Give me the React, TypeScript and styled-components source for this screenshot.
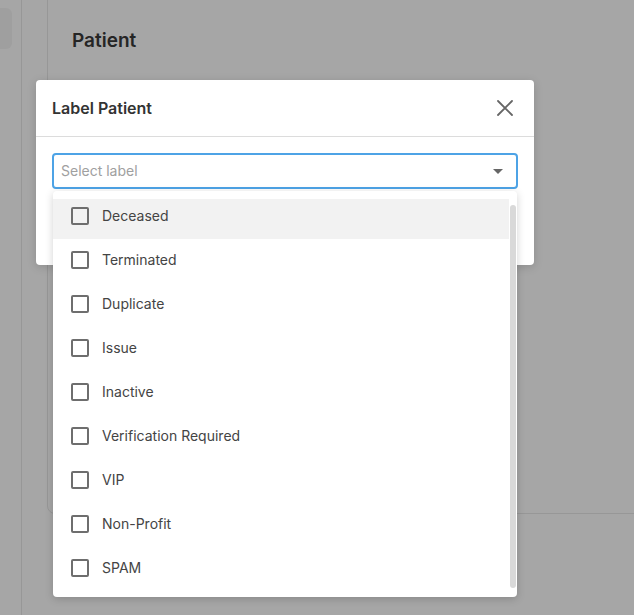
import React from 'react';
import styled, { createGlobalStyle } from 'styled-components';

const LABELS = [
    'Deceased',
    'Terminated',
    'Duplicate',
    'Issue',
    'Inactive',
    'Verification Required',
    'VIP',
    'Non-Profit',
    'SPAM',
];

const GlobalStyle = createGlobalStyle`
    html, body {
        margin: 0;
        padding: 0;
        background: #ffffff;
        font-family: Inter, "Liberation Sans", sans-serif;
    }
`;

const Page = styled.div`
    position: relative;
    display: flex;
    height: 615px;
    overflow: hidden;
    background: #ffffff;
`;

const Sidebar = styled.div`
    width: 22px;
    flex-shrink: 0;
    padding-top: 8px;
    border-right: 1px solid #e8e8e8;
    box-sizing: border-box;
`;

const SideItem = styled.div`
    width: 12px;
    height: 41px;
    border-radius: 0 6px 6px 0;
    background: #f5f5f5;
`;

const Rail = styled.div`
    width: 25px;
    flex-shrink: 0;
`;

const Main = styled.div`
    flex: 1;
    min-width: 0;
`;

const Card = styled.div`
    margin-top: -10px;
    margin-right: -20px;
    height: 524px;
    box-sizing: border-box;
    border: 1px solid #e8e8e8;
    border-radius: 8px;
    padding: 36px 24px 0;
`;

const CardTitle = styled.h1`
    margin: 0;
    font-size: 19px;
    font-weight: 600;
    line-height: 28px;
    color: #3a3a3a;
`;

const Overlay = styled.div`
    position: absolute;
    inset: 0;
    background: rgba(0, 0, 0, 0.35);
`;

const Modal = styled.div`
    position: absolute;
    left: 36px;
    top: 80px;
    width: 498px;
    height: 185px;
    background: #ffffff;
    border-radius: 4px;
    box-shadow: 0 2px 10px rgba(0, 0, 0, 0.15);
`;

const ModalHeader = styled.div`
    display: flex;
    align-items: center;
    justify-content: space-between;
    height: 56px;
    padding: 0 20px 0 16px;
    border-bottom: 1px solid #dcdcdc;
`;

const ModalTitle = styled.h2`
    margin: 0;
    font-size: 16px;
    font-weight: 600;
    color: #333333;
`;

const CloseButton = styled.button`
    display: flex;
    align-items: center;
    justify-content: center;
    width: 18px;
    height: 18px;
    padding: 0;
    border: none;
    background: none;
    cursor: pointer;
`;

const ModalBody = styled.div`
    position: relative;
    padding: 16px;
`;

const SelectBox = styled.div`
    display: flex;
    align-items: center;
    justify-content: space-between;
    height: 36px;
    box-sizing: border-box;
    padding: 0 13px 1px 7px;
    border: 2px solid #4da3e6;
    border-radius: 4px;
`;

const Placeholder = styled.span`
    font-size: 14px;
    color: #a0a0a0;
`;

const Caret = styled.span`
    width: 0;
    height: 0;
    border-left: 5px solid transparent;
    border-right: 5px solid transparent;
    border-top: 5px solid #666666;
    margin-top: 2px;
`;

const Menu = styled.div`
    position: absolute;
    left: 17px;
    top: 54px;
    width: 464px;
    height: 406px;
    display: flex;
    background: #ffffff;
    border-radius: 4px;
    box-shadow: 0 2px 8px rgba(0, 0, 0, 0.18);
    z-index: 2;
`;

const OptionList = styled.ul`
    flex: 1;
    list-style: none;
    margin: 0;
    padding: 8px 0 6px;
    display: flex;
    flex-direction: column;
    gap: 4px;
`;

const Option = styled.li<{ $active?: boolean }>`
    display: flex;
    align-items: center;
    gap: 13px;
    height: 40px;
    box-sizing: border-box;
    padding: 0 0 7px 18px;
    background: ${(p) => (p.$active ? '#f2f2f2' : 'transparent')};
    font-size: 14px;
    color: #444444;
    cursor: pointer;
`;

const CheckBox = styled.span`
    width: 18px;
    height: 18px;
    box-sizing: border-box;
    border: 2px solid #6e6e6e;
    border-radius: 2px;
    flex-shrink: 0;
`;

const ScrollTrack = styled.div`
    width: 8px;
    display: flex;
    justify-content: center;
    padding: 14px 0 9px;
    box-sizing: border-box;
`;

const ScrollThumb = styled.div`
    width: 6px;
    height: 100%;
    border-radius: 3px;
    background: #d9d9d9;
`;

const CloseIcon = () => (
    <svg width="16" height="16" viewBox="0 0 16 16">
        <path d="M1 1L15 15M15 1L1 15" stroke="#666666" strokeWidth="1.8" strokeLinecap="round" />
    </svg>
);

const App = () => {
    return (
        <>
            <GlobalStyle />
            <Page>
                <Sidebar>
                    <SideItem />
                </Sidebar>
                <Rail />
                <Main>
                    <Card>
                        <CardTitle>Patient</CardTitle>
                    </Card>
                </Main>
                <Overlay />
                <Modal>
                    <ModalHeader>
                        <ModalTitle>Label Patient</ModalTitle>
                        <CloseButton aria-label="Close">
                            <CloseIcon />
                        </CloseButton>
                    </ModalHeader>
                    <ModalBody>
                        <SelectBox>
                            <Placeholder>Select label</Placeholder>
                            <Caret />
                        </SelectBox>
                        <Menu>
                            <OptionList>
                                {LABELS.map((label, i) => (
                                    <Option key={label} $active={i === 0}>
                                        <CheckBox />
                                        {label}
                                    </Option>
                                ))}
                            </OptionList>
                            <ScrollTrack>
                                <ScrollThumb />
                            </ScrollTrack>
                        </Menu>
                    </ModalBody>
                </Modal>
            </Page>
        </>
    );
};

export default App;
